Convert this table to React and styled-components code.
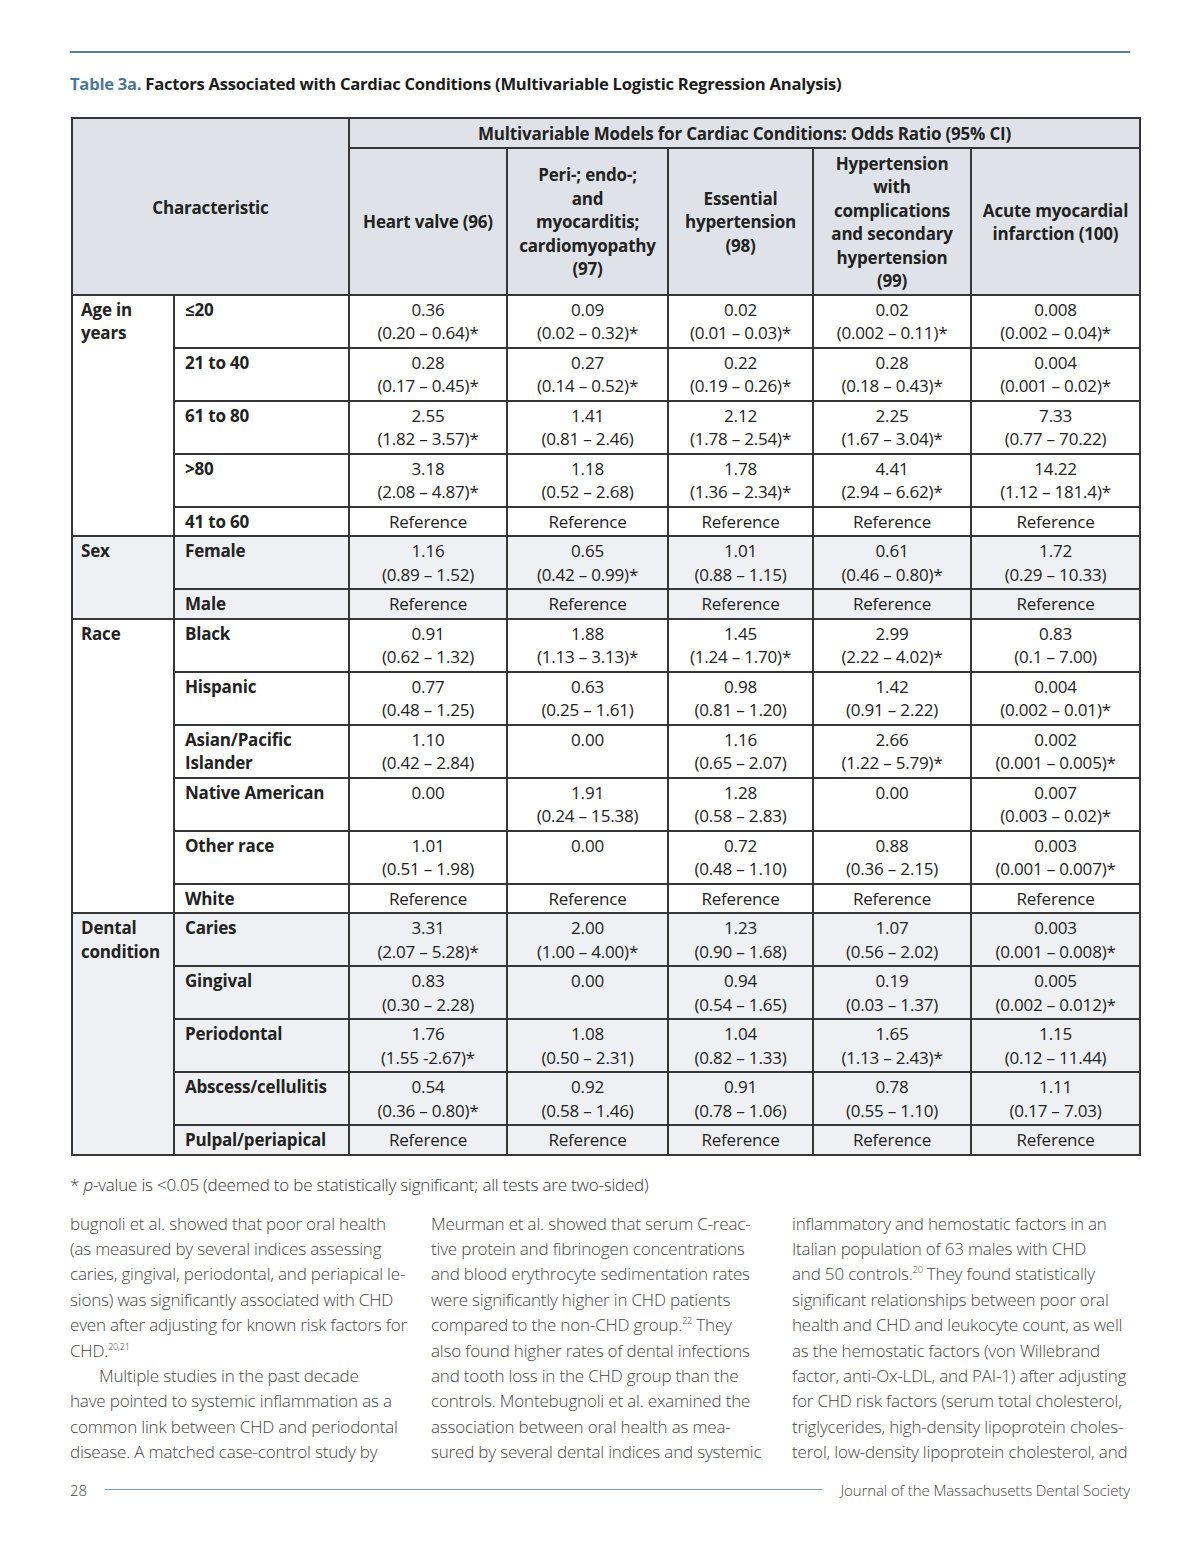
import React from "react";
import styled, { createGlobalStyle } from "styled-components";

const GlobalStyle = createGlobalStyle`
  body {
    margin: 0;
    background: #fff;
    font-family: "Open Sans", "Liberation Sans", sans-serif;
    color: #222;
  }
`;

const Page = styled.div`
  width: 1200px;
  box-sizing: border-box;
  padding: 51px 70px 0 70px;
`;

const TopRule = styled.div`
  height: 2px;
  background: #5b7d99;
`;

const Title = styled.h2`
  margin: 20px 0 0 0;
  font-size: 16.6px;
  line-height: 22px;
  font-weight: 700;
  letter-spacing: -0.25px;
  color: #1c1c1c;
  > span {
    color: #4f7796;
  }
`;

const Table = styled.table`
  margin: 22px 0 0 1px;
  width: 1068px;
  table-layout: fixed;
  border-collapse: collapse;
  font-size: 17px;
  line-height: 23.5px;
  letter-spacing: -0.2px;
  td,
  th {
    border: 2px solid #363636;
  }
`;

const HeadCell = styled.th`
  background: #dfe2e8;
  font-weight: 700;
  text-align: center;
  vertical-align: middle;
  padding: ${(p) => (p.$top ? "3px 6px 1px" : "3px 4px 1px")};
`;

const Row = styled.tr`
  background: ${(p) => (p.$shade ? "#eef0f3" : "#fff")};
`;

const GroupCell = styled.td`
  font-weight: 700;
  vertical-align: top;
  padding: 2px 8px 2px;
`;

const LabelCell = styled.td`
  font-weight: 700;
  vertical-align: top;
  padding: 2px 10px 2px;
`;

const ValueCell = styled.td`
  text-align: center;
  vertical-align: top;
  padding: 2px 4px 2px;
  span {
    display: block;
  }
`;

const Footnote = styled.p`
  margin: 18px 0 0 0;
  font-size: 17px;
  line-height: 22px;
  font-weight: 300;
  color: #333;
  letter-spacing: -0.2px;
`;

const Columns = styled.div`
  margin-top: 15px;
  display: grid;
  grid-template-columns: 335px 335px 340px;
  column-gap: 26px;
`;

const Column = styled.div`
  font-size: 17px;
  line-height: 25.4px;
  font-weight: 300;
  color: #444;
  letter-spacing: -0.18px;
`;

const Line = styled.div`
  white-space: nowrap;
  padding-left: ${(p) => (p.$indent ? "29px" : "0")};
  sup {
    font-size: 9px;
    line-height: 0;
    vertical-align: 7px;
  }
`;

const Footer = styled.div`
  margin-top: 15px;
  display: flex;
  align-items: center;
  gap: 18px;
  font-size: 15px;
  line-height: 20px;
  font-weight: 300;
  color: #444;
  letter-spacing: -0.1px;
`;

const FooterRule = styled.div`
  flex: 1;
  height: 1px;
  background: #7f9cb6;
`;

const cols = [102, 175, 158, 161, 145, 158, 169];

const R = "Reference";
const ref5 = [R, R, R, R, R];

const groups = [
  {
    name: ["Age in", "years"],
    shade: false,
    rows: [
      ["≤20", [["0.36", "(0.20 – 0.64)*"], ["0.09", "(0.02 – 0.32)*"], ["0.02", "(0.01 – 0.03)*"], ["0.02", "(0.002 – 0.11)*"], ["0.008", "(0.002 – 0.04)*"]]],
      ["21 to 40", [["0.28", "(0.17 – 0.45)*"], ["0.27", "(0.14 – 0.52)*"], ["0.22", "(0.19 – 0.26)*"], ["0.28", "(0.18 – 0.43)*"], ["0.004", "(0.001 – 0.02)*"]]],
      ["61 to 80", [["2.55", "(1.82 – 3.57)*"], ["1.41", "(0.81 – 2.46)"], ["2.12", "(1.78 – 2.54)*"], ["2.25", "(1.67 – 3.04)*"], ["7.33", "(0.77 – 70.22)"]]],
      [">80", [["3.18", "(2.08 – 4.87)*"], ["1.18", "(0.52 – 2.68)"], ["1.78", "(1.36 – 2.34)*"], ["4.41", "(2.94 – 6.62)*"], ["14.22", "(1.12 – 181.4)*"]]],
      ["41 to 60", ref5],
    ],
  },
  {
    name: ["Sex"],
    shade: true,
    rows: [
      ["Female", [["1.16", "(0.89 – 1.52)"], ["0.65", "(0.42 – 0.99)*"], ["1.01", "(0.88 – 1.15)"], ["0.61", "(0.46 – 0.80)*"], ["1.72", "(0.29 – 10.33)"]]],
      ["Male", ref5],
    ],
  },
  {
    name: ["Race"],
    shade: false,
    rows: [
      ["Black", [["0.91", "(0.62 – 1.32)"], ["1.88", "(1.13 – 3.13)*"], ["1.45", "(1.24 – 1.70)*"], ["2.99", "(2.22 – 4.02)*"], ["0.83", "(0.1 – 7.00)"]]],
      ["Hispanic", [["0.77", "(0.48 – 1.25)"], ["0.63", "(0.25 – 1.61)"], ["0.98", "(0.81 – 1.20)"], ["1.42", "(0.91 – 2.22)"], ["0.004", "(0.002 – 0.01)*"]]],
      [["Asian/Pacific", "Islander"], [["1.10", "(0.42 – 2.84)"], ["0.00"], ["1.16", "(0.65 – 2.07)"], ["2.66", "(1.22 – 5.79)*"], ["0.002", "(0.001 – 0.005)*"]]],
      ["Native American", [["0.00"], ["1.91", "(0.24 – 15.38)"], ["1.28", "(0.58 – 2.83)"], ["0.00"], ["0.007", "(0.003 – 0.02)*"]]],
      ["Other race", [["1.01", "(0.51 – 1.98)"], ["0.00"], ["0.72", "(0.48 – 1.10)"], ["0.88", "(0.36 – 2.15)"], ["0.003", "(0.001 – 0.007)*"]]],
      ["White", ref5],
    ],
  },
  {
    name: ["Dental", "condition"],
    shade: true,
    rows: [
      ["Caries", [["3.31", "(2.07 – 5.28)*"], ["2.00", "(1.00 – 4.00)*"], ["1.23", "(0.90 – 1.68)"], ["1.07", "(0.56 – 2.02)"], ["0.003", "(0.001 – 0.008)*"]]],
      ["Gingival", [["0.83", "(0.30 – 2.28)"], ["0.00"], ["0.94", "(0.54 – 1.65)"], ["0.19", "(0.03 – 1.37)"], ["0.005", "(0.002 – 0.012)*"]]],
      ["Periodontal", [["1.76", "(1.55 -2.67)*"], ["1.08", "(0.50 – 2.31)"], ["1.04", "(0.82 – 1.33)"], ["1.65", "(1.13 – 2.43)*"], ["1.15", "(0.12 – 11.44)"]]],
      ["Abscess/cellulitis", [["0.54", "(0.36 – 0.80)*"], ["0.92", "(0.58 – 1.46)"], ["0.91", "(0.78 – 1.06)"], ["0.78", "(0.55 – 1.10)"], ["1.11", "(0.17 – 7.03)"]]],
      ["Pulpal/periapical", ref5],
    ],
  },
];

const headers = [
  ["Heart valve (96)"],
  ["Peri-; endo-;", "and", "myocarditis;", "cardiomyopathy", "(97)"],
  ["Essential", "hypertension", "(98)"],
  ["Hypertension", "with", "complications", "and secondary", "hypertension", "(99)"],
  ["Acute myocardial", "infarction (100)"],
];

const lines = (arr) =>
  arr.map((t, i) => (
    <React.Fragment key={i}>
      {i > 0 && <br />}
      {t}
    </React.Fragment>
  ));

const text = [
  [
    "bugnoli et al. showed that poor oral health",
    "(as measured by several indices assessing",
    "caries, gingival, periodontal, and periapical le-",
    "sions) was significantly associated with CHD",
    "even after adjusting for known risk factors for",
    <>CHD.<sup>20,21</sup></>,
    { indent: true, t: "Multiple studies in the past decade" },
    "have pointed to systemic inflammation as a",
    "common link between CHD and periodontal",
    "disease. A matched case-control study by",
  ],
  [
    "Meurman et al. showed that serum C-reac-",
    "tive protein and fibrinogen concentrations",
    "and blood erythrocyte sedimentation rates",
    "were significantly higher in CHD patients",
    <>compared to the non-CHD group.<sup>22</sup> They</>,
    "also found higher rates of dental infections",
    "and tooth loss in the CHD group than the",
    "controls. Montebugnoli et al. examined the",
    "association between oral health as mea-",
    "sured by several dental indices and systemic",
  ],
  [
    "inflammatory and hemostatic factors in an",
    "Italian population of 63 males with CHD",
    <>and 50 controls.<sup>20</sup> They found statistically</>,
    "significant relationships between poor oral",
    "health and CHD and leukocyte count, as well",
    "as the hemostatic factors (von Willebrand",
    "factor, anti-Ox-LDL, and PAI-1) after adjusting",
    "for CHD risk factors (serum total cholesterol,",
    "triglycerides, high-density lipoprotein choles-",
    "terol, low-density lipoprotein cholesterol, and",
  ],
];

const App = () => {
  return (
    <Page>
      <GlobalStyle />
      <TopRule />
      <Title>
        <span>Table 3a.</span> Factors Associated with Cardiac Conditions (Multivariable Logistic
        Regression Analysis)
      </Title>
      <Table>
        <colgroup>
          {cols.map((w, i) => (
            <col key={i} style={{ width: w }} />
          ))}
        </colgroup>
        <thead>
          <tr>
            <HeadCell rowSpan={2} colSpan={2}>
              Characteristic
            </HeadCell>
            <HeadCell colSpan={5} $top>
              Multivariable Models for Cardiac Conditions: Odds Ratio (95% CI)
            </HeadCell>
          </tr>
          <tr>
            {headers.map((h, i) => (
              <HeadCell key={i}>{lines(h)}</HeadCell>
            ))}
          </tr>
        </thead>
        <tbody>
          {groups.map((g) =>
            g.rows.map(([label, vals], ri) => (
              <Row key={g.name[0] + ri} $shade={g.shade}>
                {ri === 0 && <GroupCell rowSpan={g.rows.length}>{lines(g.name)}</GroupCell>}
                <LabelCell>{Array.isArray(label) ? lines(label) : label}</LabelCell>
                {vals.map((v, vi) => (
                  <ValueCell key={vi}>
                    {Array.isArray(v) ? v.map((t, ti) => <span key={ti}>{t}</span>) : v}
                  </ValueCell>
                ))}
              </Row>
            ))
          )}
        </tbody>
      </Table>
      <Footnote>
        * <i>p</i>-value is &lt;0.05 (deemed to be statistically significant; all tests are two-sided)
      </Footnote>
      <Columns>
        {text.map((col, ci) => (
          <Column key={ci}>
            {col.map((l, li) =>
              l && l.indent ? (
                <Line key={li} $indent>
                  {l.t}
                </Line>
              ) : (
                <Line key={li}>{l}</Line>
              )
            )}
          </Column>
        ))}
      </Columns>
      <Footer>
        <span>28</span>
        <FooterRule />
        <span>Journal of the Massachusetts Dental Society</span>
      </Footer>
    </Page>
  );
};

export default App;
